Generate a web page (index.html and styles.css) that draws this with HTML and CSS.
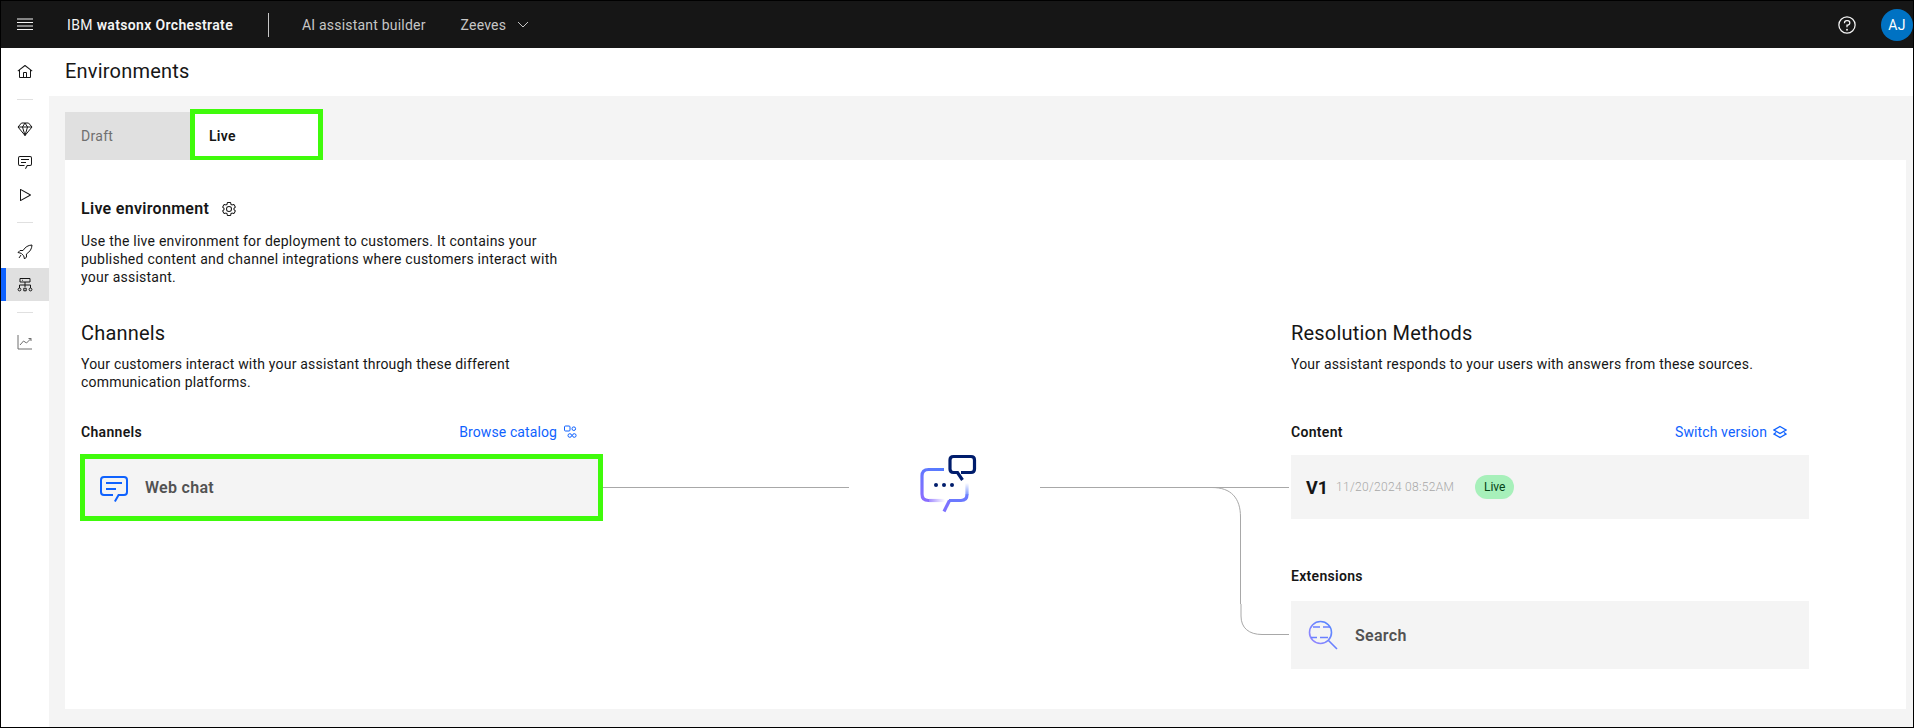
FILE: index.html
```html
<!DOCTYPE html>
<html lang="en">
<head>
<meta charset="utf-8">
<title>Environments</title>
<link rel="stylesheet" href="styles.css">
</head>
<body>
<div class="page">
  <header class="topbar">
    <svg class="menu-icon" viewBox="0 0 16 16"><path d="M0 2h16M0 5.500h16M0 9h16M0 12.500h16" /></svg>
    <div class="brand">IBM <b>watsonx Orchestrate</b></div>
    <span class="top-sep"></span>
    <span class="top-link">AI assistant builder</span>
    <span class="top-link zeeves">Zeeves</span>
    <svg class="chevron" viewBox="0 0 12 7"><path d="M1 1l5 5 5-5"/></svg>
    <span class="top-spacer"></span>
    <svg class="help-icon" viewBox="0 0 32 32"><path d="M16,2A14,14,0,1,0,30,16,14,14,0,0,0,16,2Zm0,26A12,12,0,1,1,28,16,12,12,0,0,1,16,28Z"/><circle cx="16" cy="23.5" r="1.5"/><path d="M17,8H15.5A4.49,4.49,0,0,0,11,12.5V13h2v-.5A2.5,2.5,0,0,1,15.5,10H17a2.5,2.5,0,0,1,0,5H15v4.5h2V17a4.5,4.5,0,0,0,0-9Z"/></svg>
    <span class="avatar">AJ</span>
  </header>
  <div class="body-row">
    <nav class="sidebar">
      <div class="nav-item"><svg class="nav-icon" viewBox="0 0 32 32"><path d="M16.6123,2.2138a1.01,1.01,0,0,0-1.2427,0L1,13.4194l1.2427,1.5717L4,13.6209V26a2.0041,2.0041,0,0,0,2,2H26a2.0037,2.0037,0,0,0,2-2V13.63L29.7573,15,31,13.4282ZM18,26H14V18h4Zm2,0V18a2.0023,2.0023,0,0,0-2-2H14a2.002,2.002,0,0,0-2,2v8H6V12.0615l10-7.79,10,7.8005V26Z"/></svg></div>
      <div class="nav-sep"></div>
      <div class="nav-item"><svg class="nav-icon line" viewBox="0 0 16 16"><path d="M4.500 2h7L15 6l-7 8.500L1 6zM1 6h14M5.500 6L8 14.500 10.500 6 8 2 5.500 6z"/></svg></div>
      <div class="nav-item"><svg class="nav-icon" viewBox="0 0 32 32"><path d="M17.74,30,16,29l4-7h6a2,2,0,0,0,2-2V8a2,2,0,0,0-2-2H6A2,2,0,0,0,4,8V20a2,2,0,0,0,2,2h9v2H6a4,4,0,0,1-4-4V8A4,4,0,0,1,6,4H26a4,4,0,0,1,4,4V20a4,4,0,0,1-4,4H21.16Z"/><path d="M8 10h16v2H8zM8 16h10v2H8z"/></svg></div>
      <div class="nav-item"><svg class="nav-icon" viewBox="0 0 32 32"><path d="M7,28a1,1,0,0,1-1-1V5a1,1,0,0,1,1.4819-.8763l20,11a1,1,0,0,1,0,1.7525l-20,11A1.0006,1.0006,0,0,1,7,28ZM8,6.6909V25.3088L24.9248,16Z"/></svg></div>
      <div class="nav-sep"></div>
      <div class="nav-item"><svg class="nav-icon line" viewBox="0 0 16 16"><path d="M15 1c-4 .3-6.500 1.800-9 5.500L3 6.500 1 8.500l3.200.8 2.500 2.500.8 3.200 2-2-.1-3C13.200 7.500 14.700 5 15 1zM4 11l-2 3"/></svg></div>
      <div class="nav-item active"><svg class="nav-icon line" viewBox="0 0 16 16"><path d="M3 1.500h10v3.500H3zM5 3.300h.8M8 5v5M2.500 11V8h11v3M6.800 11.200h2.400v2.600H6.800z"/><circle cx="2.500" cy="12.500" r="1.400"/><circle cx="13.500" cy="12.500" r="1.400"/></svg></div>
      <div class="nav-sep"></div>
      <div class="nav-item"><svg class="nav-icon line muted" viewBox="0 0 16 16"><path d="M1 1v14h14M3 11l3.500-4 3 2L14 4.500M11.500 4.500H14V7"/></svg></div>
    </nav>
    <main class="main">
      <h1 class="page-title">Environments</h1>
      <div class="panel">
        <div class="tabs">
          <div class="tab">Draft</div>
          <div class="tab tab-live">Live</div>
        </div>
        <section class="card">
          <div class="env-head">
            <h2 class="env-title">Live environment</h2>
            <svg class="gear" viewBox="0 0 32 32"><path d="M27,16.76c0-.25,0-.5,0-.76s0-.51,0-.77l1.92-1.68A2,2,0,0,0,29.3,11L26.94,7a2,2,0,0,0-1.73-1,2,2,0,0,0-.64.1l-2.43.82a11.35,11.35,0,0,0-1.31-.75l-.51-2.52a2,2,0,0,0-2-1.61H13.64a2,2,0,0,0-2,1.61l-.51,2.52a11.48,11.48,0,0,0-1.32.75L7.43,6.06A2,2,0,0,0,6.79,6,2,2,0,0,0,5.06,7L2.7,11a2,2,0,0,0,.41,2.51L5,15.24c0,.25,0,.5,0,.76s0,.51,0,.77L3.11,18.45A2,2,0,0,0,2.7,21L5.06,25a2,2,0,0,0,1.73,1,2,2,0,0,0,.64-.1l2.43-.82a11.35,11.35,0,0,0,1.31.75l.51,2.52a2,2,0,0,0,2,1.61h4.72a2,2,0,0,0,2-1.61l.51-2.52a11.48,11.48,0,0,0,1.32-.75l2.42.82a2,2,0,0,0,.64.1,2,2,0,0,0,1.73-1L29.3,21a2,2,0,0,0-.41-2.51ZM25.21,24l-3.43-1.16a8.86,8.86,0,0,1-2.71,1.57L18.36,28H13.64l-.71-3.55a9.36,9.36,0,0,1-2.7-1.57L6.79,24,4.43,20l2.72-2.4a8.9,8.9,0,0,1,0-3.13L4.43,12,6.79,8l3.43,1.16a8.86,8.86,0,0,1,2.71-1.57L13.64,4h4.72l.71,3.55a9.36,9.36,0,0,1,2.7,1.57L25.21,8,27.57,12l-2.72,2.4a8.9,8.9,0,0,1,0,3.13L27.57,20Z"/><path d="M16,22a6,6,0,1,1,6-6A5.94,5.94,0,0,1,16,22Zm0-10a3.91,3.91,0,0,0-4,4,3.91,3.91,0,0,0,4,4,3.91,3.91,0,0,0,4-4A3.91,3.91,0,0,0,16,12Z"/></svg>
          </div>
          <p class="env-desc">Use the live environment for deployment to customers. It contains your published content and channel integrations where customers interact with your assistant.</p>
          <div class="diagram">
            <div class="col">
              <h3 class="col-title">Channels</h3>
              <p class="col-desc">Your customers interact with your assistant through these different communication platforms.</p>
              <div class="label-row pad-left">
                <span class="label">Channels</span>
                <span class="link">Browse catalog
                  <svg class="link-icon" viewBox="0 0 14 14"><rect x="1.500" y="1" width="5.500" height="5" rx="1"/><circle cx="10.800" cy="3.700" r="1.800"/><circle cx="6.800" cy="10.500" r="1.800"/><circle cx="11.300" cy="10.500" r="1.800"/></svg>
                </span>
              </div>
              <div class="row-card webchat">
                <svg class="chat-icon" viewBox="0 0 32 32"><path d="M17.74,30,16,29l4-7h6a2,2,0,0,0,2-2V8a2,2,0,0,0-2-2H6A2,2,0,0,0,4,8V20a2,2,0,0,0,2,2h9v2H6a4,4,0,0,1-4-4V8A4,4,0,0,1,6,4H26a4,4,0,0,1,4,4V20a4,4,0,0,1-4,4H21.16Z"/><path d="M8 10h16v2H8zM8 16h10v2H8z"/></svg>
                <span class="row-name">Web chat</span>
              </div>
            </div>
            <div class="connector">
              <svg class="connector-art" width="687" height="360" fill="none">
                <defs>
                  <linearGradient id="purple" gradientUnits="userSpaceOnUse" x1="322" y1="180" x2="340" y2="146"><stop offset="0" stop-color="#8a6dff"/><stop offset="1" stop-color="#4f7dff"/></linearGradient>
                  <linearGradient id="fadeBottom" gradientUnits="userSpaceOnUse" x1="322" y1="0" x2="342" y2="0"><stop offset="0" stop-color="#8a6dff"/><stop offset="1" stop-color="#8a6dff" stop-opacity="0"/></linearGradient>
                  <linearGradient id="fadeRight" gradientUnits="userSpaceOnUse" x1="0" y1="178" x2="0" y2="163"><stop offset="0" stop-color="#5b7cff"/><stop offset="1" stop-color="#5b7cff" stop-opacity="0"/></linearGradient>
                </defs>
                <path class="wire" d="M0 167.500H246M437 167.500H686M609 167.500C628 167.500 637.500 178 637.500 197V284M638 284V296C638 308 646 314.500 659 314.500H686"/>
                <g>
                  <path class="bubble-light" stroke="url(#purple)" d="M341 149.500H325.500C321 149.500 319 151.500 319 156V174C319 178.500 321 180.500 325.500 180.500H326"/>
                  <path class="bubble-light" stroke="url(#fadeBottom)" d="M326 180.500H342"/>
                  <path class="bubble-light" stroke="#7d72ff" d="M346.500 180.500L341 191.500"/>
                  <path class="bubble-light" stroke="#6b79ff" d="M346 180.500H358C362 180.500 364 178.500 364 174.500"/>
                  <path class="bubble-light" stroke="url(#fadeRight)" d="M364 175V163"/>
                  <path class="bubble-dark" d="M359.500 160L354.500 152.500H350.500C348 152.500 347 151.500 347 149V140C347 137.500 348 136.500 350.500 136.500H368C370.500 136.500 371.500 137.500 371.500 140V149C371.500 151.500 370.500 152.500 368 152.500H358"/>
                  <circle class="dot" cx="333" cy="165" r="2"/><circle class="dot" cx="341" cy="165" r="2"/><circle class="dot" cx="349" cy="165" r="2"/>
                </g>
              </svg>
            </div>
            <div class="col">
              <h3 class="col-title">Resolution Methods</h3>
              <p class="col-desc">Your assistant responds to your users with answers from these sources.</p>
              <div class="label-row right-row">
                <span class="label">Content</span>
                <span class="link">Switch version
                  <svg class="link-icon layers" viewBox="0 0 14 14"><path d="M7 1.500L13 5 7 8.500 1 5z"/><path d="M3 7.500L1 9l6 3.500L13 9l-2-1.500"/></svg>
                </span>
              </div>
              <div class="row-card version">
                <span class="version-name">V1</span>
                <span class="version-date">11/20/2024 08:52AM</span>
                <span class="badge">Live</span>
              </div>
              <div class="label ext-label">Extensions</div>
              <div class="row-card search">
                <svg class="search-icon" viewBox="0 0 30 30" fill="none">
                  <defs><linearGradient id="searchGrad" x1="0" y1="1" x2="1" y2="0"><stop offset="0" stop-color="#9a86ff"/><stop offset="1" stop-color="#4f86ff"/></linearGradient></defs>
                  <circle cx="12.500" cy="12.500" r="11" stroke="url(#searchGrad)" stroke-width="1.600"/>
                  <path stroke="#6a80ff" stroke-width="1.600" d="M20.500 20.500L29 29M5 7h7M15 7h7M3 17.500h6M12 17.500h8"/>
                </svg>
                <span class="row-name">Search</span>
              </div>
            </div>
          </div>
        </section>
      </div>
    </main>
  </div>
</div>
</body>
</html>
```

FILE: styles.css
```css
* { box-sizing: border-box; }
html, body { margin: 0; padding: 0; background: #fff; }
body { font-family: "Roboto", "Liberation Sans", sans-serif; color: #161616; }
h1, h2, h3, p { margin: 0; font-weight: 400; }

.page { width: 1914px; height: 728px; border: 1px solid #000; display: flex; flex-direction: column; overflow: hidden; }

.topbar { height: 47px; flex: none; background: #161616; color: #c6c6c6; display: flex; align-items: center; font-size: 14px; letter-spacing: .2px; }
.menu-icon { width: 16px; height: 16px; margin-left: 16px; stroke: #f4f4f4; stroke-width: 1.2; fill: none; }
.brand { margin-left: 34px; color: #f4f4f4; font-size: 14px; letter-spacing: .35px; white-space: nowrap; }
.brand b { font-weight: 600; }
.top-sep { width: 1px; height: 24px; background: #c6c6c6; margin-left: 35px; }
.top-link { margin-left: 33px; white-space: nowrap; }
.zeeves { margin-left: 35px; }
.chevron { width: 12px; height: 7px; margin-left: 11px; fill: none; stroke: #c6c6c6; stroke-width: 1; }
.top-spacer { flex: 1; }
.help-icon { width: 20px; height: 20px; fill: #f4f4f4; margin-right: 24px; }
.avatar { width: 32px; height: 32px; border-radius: 50%; background: #0072c3; color: #fff; display: flex; align-items: center; justify-content: center; font-size: 14px; }

.body-row { flex: 1; display: flex; min-height: 0; }
.sidebar { width: 48px; flex: none; padding-top: 7px; display: flex; flex-direction: column; }
.nav-item { height: 33px; display: flex; align-items: center; justify-content: center; }
.nav-item.active { background: #e0e0e0; box-shadow: inset 5px 0 0 #0f62fe; }
.nav-icon { width: 16px; height: 16px; fill: #161616; }
.nav-icon.line { fill: none; stroke: #161616; stroke-width: 1; }
.nav-icon.muted { stroke: #6f6f6f; }
.nav-sep { height: 1px; width: 16px; background: #e0e0e0; margin: 11px 0 12px 16px; }

.main { flex: 1; display: flex; flex-direction: column; min-width: 0; }
.page-title { height: 48px; flex: none; padding-left: 16px; font-size: 20px; line-height: 47px; letter-spacing: .2px; }
.panel { flex: 1; background: #f4f4f4; padding: 16px 7px 18px 16px; display: flex; flex-direction: column; }
.tabs { display: flex; height: 48px; flex: none; }
.tab { width: 125px; background: #e0e0e0; color: #6f6f6f; font-size: 14px; letter-spacing: .3px; display: flex; align-items: center; padding-left: 16px; }
.tab-live { width: 133px; margin: -3px 0 -1px; background: #fff; border: 5px solid #3ffb0b; color: #161616; font-weight: 600; padding: 1px 0 0 14px; }

.card { flex: 1; background: #fff; padding: 39px 16px 0; }
.env-head { display: flex; align-items: center; height: 20px; }
.env-title { font-size: 16px; font-weight: 600; line-height: 20px; letter-spacing: .3px; }
.gear { width: 16px; height: 16px; margin-left: 12px; fill: #161616; }
.env-desc { width: 500px; margin-top: 13px; font-size: 14px; line-height: 18px; letter-spacing: .24px; }

.diagram { display: grid; grid-template-columns: 522px 688px 518px; margin-top: 34px; }
.col { display: flex; flex-direction: column; min-width: 0; }
.col-title { font-size: 20px; line-height: 26px; letter-spacing: .2px; }
.col-desc { width: 480px; height: 36px; margin-top: 9px; font-size: 14px; line-height: 18px; letter-spacing: .2px; }
.label-row { display: flex; justify-content: space-between; align-items: center; height: 18px; margin-top: 32px; }
.pad-left { padding-right: 26px; }
.right-row { padding-right: 22px; }
.label { font-size: 14px; font-weight: 600; line-height: 18px; letter-spacing: .3px; }
.link { display: flex; align-items: center; gap: 6px; color: #0f62fe; font-size: 14px; letter-spacing: .1px; }
.link-icon { width: 14px; height: 14px; fill: none; stroke: #0f62fe; stroke-width: 1; }
.link-icon.layers { stroke-width: 1.4; }

.row-card { background: #f4f4f4; display: flex; align-items: center; }
.row-name { color: #525252; font-size: 16px; font-weight: 600; letter-spacing: .3px; }
.webchat { height: 67px; margin: 13px 0 0 -1px; border: 5px solid #3ffb0b; padding-left: 13px; }
.chat-icon { width: 32px; height: 32px; fill: #0f62fe; margin-right: 15px; }
.version { height: 64px; margin-top: 14px; padding-left: 15px; }
.version-name { font-size: 18px; font-weight: 700; }
.version-date { margin-left: 8px; color: #a8a8a8; font-size: 12px; font-weight: 300; letter-spacing: .3px; }
.badge { margin-left: 21px; height: 24px; width: 39px; display: flex; align-items: center; justify-content: center; border-radius: 12px; background: #a7f0ba; color: #044317; font-size: 12px; }
.ext-label { margin-top: 48px; }
.search { height: 68px; margin-top: 16px; padding-left: 17px; }
.search-icon { width: 30px; height: 30px; margin-right: 17px; }

.connector { position: relative; }
.connector-art { position: absolute; left: 0; top: 0; }
.wire { stroke: #a8a8a8; stroke-width: 1; }
.bubble-light { stroke-width: 3.2; fill: none; }
.bubble-dark { stroke: #001d6c; stroke-width: 3.2; fill: none; }
.dot { fill: #001d6c; }
```
